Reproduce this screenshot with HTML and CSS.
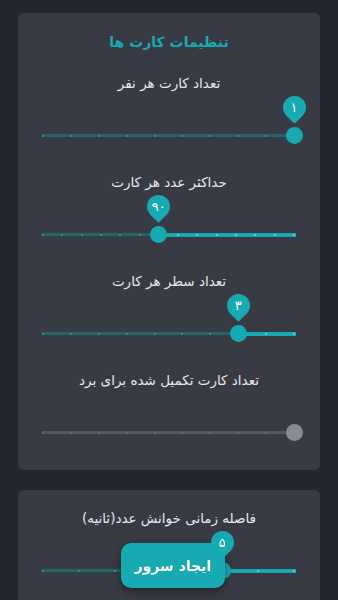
FILE: index.html
```html
<!DOCTYPE html>
<html lang="fa" dir="rtl">
  <head>
    <meta charset="UTF-8" />
    <meta name="viewport" content="width=device-width, initial-scale=1.0" />
    <title>تنظیمات</title>
    <link rel="stylesheet" href="styles.css">
  </head>
  <body>
    <div class="page">
      <div class="card">
        <h2 class="card-title">تنظیمات کارت ها</h2>

        <div class="setting">
          <div class="label">تعداد کارت هر نفر</div>
          <div class="slider" data-steps="9" data-index="0" data-value="۱"></div>
        </div>

        <div class="setting">
          <div class="label">حداکثر عدد هر کارت</div>
          <div class="slider" data-steps="13" data-index="7" data-value="۹۰"></div>
        </div>

        <div class="setting">
          <div class="label">تعداد سطر هر کارت</div>
          <div class="slider" data-steps="9" data-index="2" data-value="۳"></div>
        </div>

        <div class="setting">
          <div class="label">تعداد کارت تکمیل شده برای برد</div>
          <div class="slider disabled" data-steps="9" data-index="0"></div>
        </div>
      </div>

      <div class="card card-second">
        <div class="setting">
          <div class="label">فاصله زمانی خوانش عدد(ثانیه)</div>
          <div class="slider" data-steps="7" data-index="2" data-value="۵"></div>
        </div>
      </div>
    </div>

    <button class="fab">ایجاد سرور</button>

    <script>
      // build ticks, thumb and pin for every slider (rtl: index 0 is the right end)
      var TRACK = 251;
      document.querySelectorAll(".slider").forEach(function (slider) {
        var steps = parseInt(slider.dataset.steps);
        var index = parseInt(slider.dataset.index);
        var x = TRACK - (TRACK * index) / steps + 1;

        var track = document.createElement("div");
        track.className = "track";
        var active = document.createElement("div");
        active.className = "track-active";
        active.style.left = x + "px";
        track.appendChild(active);

        for (var i = 0; i <= steps; i++) {
          var dot = document.createElement("span");
          dot.className = "tick";
          var dx = 1 + (TRACK * i) / steps;
          dot.style.left = dx + "px";
          if (dx > x) dot.classList.add("on");
          track.appendChild(dot);
        }

        var thumb = document.createElement("div");
        thumb.className = "thumb";
        thumb.style.left = x + "px";
        track.appendChild(thumb);

        if (slider.dataset.value) {
          var pin = document.createElement("div");
          pin.className = "pin";
          pin.style.left = x + "px";
          var num = document.createElement("span");
          num.textContent = slider.dataset.value;
          pin.appendChild(num);
          track.appendChild(pin);
        }

        slider.appendChild(track);
      });
    </script>
  </body>
</html>
```

FILE: styles.css
```css
body {
  margin: 0;
  background-color: #23272f;
  font-family: "DejaVu Sans", "Noto Sans", sans-serif;
  color: #e8e8ea;
}
.page {
  padding: 13px 18px 0 18px;
}
.card {
  background-color: #393b44;
  border-radius: 6px;
  padding: 17px 0 3px 0;
}
.card-second {
  margin-top: 20px;
  padding-top: 16px;
  padding-bottom: 20px;
}
.card-title {
  margin: 0 0 17px 0;
  text-align: center;
  font-size: 14px;
  line-height: 24px;
  font-weight: bold;
  color: #17aab2;
}
.setting {
  height: 99px;
}
.label {
  text-align: center;
  font-size: 13.5px;
  line-height: 24px;
}
.slider {
  direction: ltr;
  height: 75px;
  padding: 0 24px;
}
.track {
  position: relative;
  top: 39px;
  height: 3px;
  background-color: #24636a;
}
.track-active {
  position: absolute;
  top: -0.5px;
  right: 0;
  height: 4px;
  background-color: #17aab2;
}
.tick {
  position: absolute;
  top: 0.5px;
  width: 2px;
  height: 2px;
  margin-left: -1px;
  border-radius: 1px;
  background-color: #4f8f95;
}
.tick.on {
  background-color: #7fd3d8;
}
.thumb {
  position: absolute;
  top: -7px;
  width: 17px;
  height: 17px;
  margin-left: -8.5px;
  border-radius: 50%;
  background-color: #17aab2;
}
.pin {
  position: absolute;
  top: -38px;
  width: 23px;
  height: 23px;
  margin-left: -11.5px;
  z-index: 2;
}
.pin::before {
  content: "";
  position: absolute;
  left: 0;
  top: 0;
  width: 23px;
  height: 23px;
  border-radius: 50% 50% 0 50%;
  background-color: #17aab2;
  transform: rotate(45deg);
}
.pin span {
  position: relative;
  display: block;
  text-align: center;
  font-size: 13px;
  line-height: 23px;
  color: #ffffff;
}
.disabled .track {
  background-color: #55575e;
}
.disabled .track-active {
  display: none;
}
.disabled .tick {
  background-color: #6c6e75;
}
.disabled .thumb {
  background-color: #8a8b90;
}
.fab {
  position: fixed;
  left: 121px;
  top: 543px;
  width: 104px;
  height: 45px;
  border: none;
  border-radius: 10px;
  background-color: #17aab2;
  color: #ffffff;
  font-family: "DejaVu Sans", sans-serif;
  font-size: 14px;
  font-weight: bold;
  box-shadow: 0 3px 8px rgba(0, 0, 0, 0.45);
  z-index: 1;
}
```
